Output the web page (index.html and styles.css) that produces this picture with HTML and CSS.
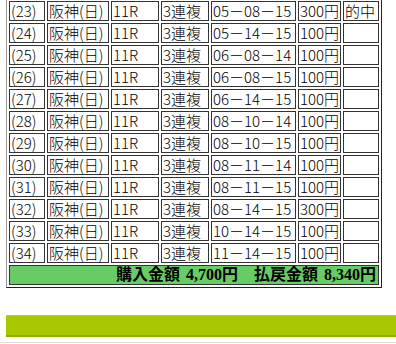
FILE: index.html
```html
<!DOCTYPE html>
<html lang="ja">
<head>
<meta charset="utf-8">
<title>購入履歴</title>
<link rel="stylesheet" href="styles.css">
</head>
<body>
<table class="bets">
  <colgroup>
    <col class="c-no"><col class="c-place"><col class="c-race"><col class="c-type"><col class="c-combo"><col class="c-amt"><col class="c-hit">
  </colgroup>
  <tbody>
    <tr><td>(23)</td><td>阪神(日)</td><td>11R</td><td>3連複</td><td>05－08－15</td><td>300円</td><td>的中</td></tr>
    <tr><td>(24)</td><td>阪神(日)</td><td>11R</td><td>3連複</td><td>05－14－15</td><td>100円</td><td></td></tr>
    <tr><td>(25)</td><td>阪神(日)</td><td>11R</td><td>3連複</td><td>06－08－14</td><td>100円</td><td></td></tr>
    <tr><td>(26)</td><td>阪神(日)</td><td>11R</td><td>3連複</td><td>06－08－15</td><td>100円</td><td></td></tr>
    <tr><td>(27)</td><td>阪神(日)</td><td>11R</td><td>3連複</td><td>06－14－15</td><td>100円</td><td></td></tr>
    <tr><td>(28)</td><td>阪神(日)</td><td>11R</td><td>3連複</td><td>08－10－14</td><td>100円</td><td></td></tr>
    <tr><td>(29)</td><td>阪神(日)</td><td>11R</td><td>3連複</td><td>08－10－15</td><td>100円</td><td></td></tr>
    <tr><td>(30)</td><td>阪神(日)</td><td>11R</td><td>3連複</td><td>08－11－14</td><td>100円</td><td></td></tr>
    <tr><td>(31)</td><td>阪神(日)</td><td>11R</td><td>3連複</td><td>08－11－15</td><td>100円</td><td></td></tr>
    <tr><td>(32)</td><td>阪神(日)</td><td>11R</td><td>3連複</td><td>08－14－15</td><td>300円</td><td></td></tr>
    <tr><td>(33)</td><td>阪神(日)</td><td>11R</td><td>3連複</td><td>10－14－15</td><td>100円</td><td></td></tr>
    <tr><td>(34)</td><td>阪神(日)</td><td>11R</td><td>3連複</td><td>11－14－15</td><td>100円</td><td></td></tr>
    <tr><td class="total" colspan="7">購入金額 4,700円　払戻金額 8,340円</td></tr>
  </tbody>
</table>
<div class="bar"></div>
<div class="rule"></div>
</body>
</html>
```
FILE: styles.css
```css
html, body {
  margin: 0;
  padding: 0;
  background: #ffffff;
}

body {
  font-family: "Noto Sans CJK JP", "Noto Sans", sans-serif;
  font-size: 15px;
  font-weight: 300;
  color: #000000;
}

.bets {
  margin: -2px 0 0 6px;
  width: 376px;
  table-layout: fixed;
  border-collapse: separate;
  border-spacing: 2px;
  border-style: solid;
  border-width: 1px;
  border-color: #9a9a9a #222222 #222222 #9a9a9a;
}

.c-no { width: 36px; }
.c-place { width: 62px; }
.c-race { width: 48px; }
.c-type { width: 48px; }
.c-combo { width: 85px; }
.c-amt { width: 43px; }
.c-hit { width: 36px; }

.bets td {
  box-sizing: border-box;
  height: 20px;
  padding: 0 1px;
  border: 1px solid #333333;
  line-height: 18px;
  white-space: nowrap;
  overflow: hidden;
  text-align: left;
  vertical-align: middle;
}

.bets td.total {
  background: #66cc66;
  text-align: right;
  font-family: "Liberation Serif", "Noto Sans CJK JP", serif;
  font-weight: bold;
  font-size: 16px;
  word-spacing: 2px;
  padding-right: 2px;
}

.bar {
  margin: 27px 0 0 6px;
  height: 19px;
  background: #a9c800;
  border-top: 1px solid #b6d21a;
  border-bottom: 2px solid #8faa00;
}

.rule {
  margin-top: 5px;
  height: 1px;
  background: #dddddd;
}
```
